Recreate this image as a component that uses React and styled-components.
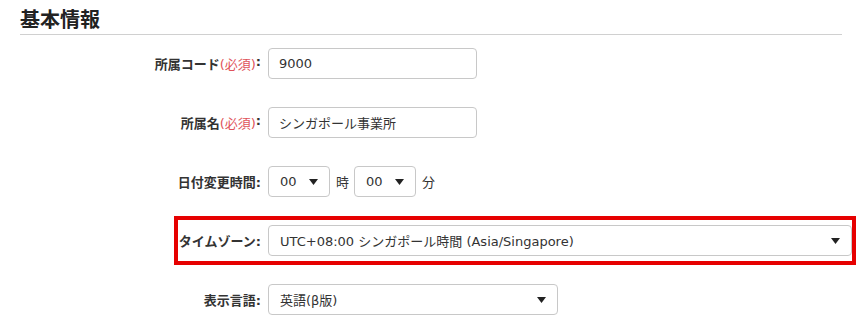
import React from "react";
import styled, { createGlobalStyle } from "styled-components";

const GlobalStyle = createGlobalStyle`
  html, body {
    margin: 0;
    padding: 0;
    background: #fff;
  }
  body {
    font-family: "DejaVu Sans", "Noto Sans CJK JP", sans-serif;
    color: #333;
  }
`;

const Page = styled.div`
  width: 861px;
  height: 331px;
  box-sizing: border-box;
  padding: 0 19px 0 20px;
  overflow: hidden;
`;

const Heading = styled.h2`
  margin: 0;
  padding-top: 5px;
  height: 29px;
  font-family: "Noto Sans CJK JP", sans-serif;
  font-size: 20px;
  line-height: 28px;
  font-weight: bold;
  color: #222;
  border-bottom: 1px solid #d0d0d0;
`;

const Form = styled.div`
  display: flex;
  flex-direction: column;
  gap: 28px;
  margin-top: 13px;
`;

const Row = styled.div`
  display: flex;
  align-items: center;
  height: 31px;
  ${(p) =>
    p.$highlight &&
    `
    margin: -9px -14px -9px 154px;
    padding: 5px 0;
    border: 4px solid #e60000;
  `}
`;

const Label = styled.label`
  flex: none;
  display: flex;
  justify-content: flex-end;
  width: ${(p) => p.$width}px;
  box-sizing: border-box;
  padding-right: 7px;
  font-size: 13px;
  font-weight: bold;
  color: #333;
  white-space: nowrap;
`;

const Required = styled.span`
  color: #e0525a;
  font-weight: normal;
`;

const TextInput = styled.div`
  box-sizing: border-box;
  width: ${(p) => p.$width}px;
  height: 31px;
  padding: 0 10px;
  display: flex;
  align-items: center;
  border: 1px solid #c8c8c8;
  border-radius: 4px;
  font-size: 13px;
  color: #333;
  background: #fff;
  white-space: nowrap;
`;

const Select = styled(TextInput)`
  justify-content: space-between;
  padding: 0 11px 0 11px;
`;

const Caret = styled.svg`
  flex: none;
  width: 9px;
  height: 6px;
  margin-top: 1px;
`;

const Unit = styled.span`
  font-size: 13px;
  color: #333;
  margin: 0 5px 0 6px;
`;

function Dropdown({ width, children }) {
  return (
    <Select $width={width}>
      <span>{children}</span>
      <Caret viewBox="0 0 9 6">
        <path d="M0 0 H9 L4.5 6 Z" fill="#222" />
      </Caret>
    </Select>
  );
}

export default function App() {
  return (
    <>
      <GlobalStyle />
      <Page>
        <Heading>基本情報</Heading>
        <Form>
          <Row>
            <Label $width={248}>
              <span>所属コード</span>
              <Required>(必須)</Required>
              <span>:</span>
            </Label>
            <TextInput $width={209}>9000</TextInput>
          </Row>
          <Row>
            <Label $width={248}>
              <span>所属名</span>
              <Required>(必須)</Required>
              <span>:</span>
            </Label>
            <TextInput $width={209}>シンガポール事業所</TextInput>
          </Row>
          <Row>
            <Label $width={248}>日付変更時間:</Label>
            <Dropdown width={62}>00</Dropdown>
            <Unit>時</Unit>
            <Dropdown width={62}>00</Dropdown>
            <Unit>分</Unit>
          </Row>
          <Row $highlight>
            <Label $width={90}>タイムゾーン:</Label>
            <Dropdown width={584}>
              UTC+08:00 シンガポール時間 (Asia/Singapore)
            </Dropdown>
          </Row>
          <Row>
            <Label $width={248}>表示言語:</Label>
            <Dropdown width={290}>英語(β版)</Dropdown>
          </Row>
        </Form>
      </Page>
    </>
  );
}
